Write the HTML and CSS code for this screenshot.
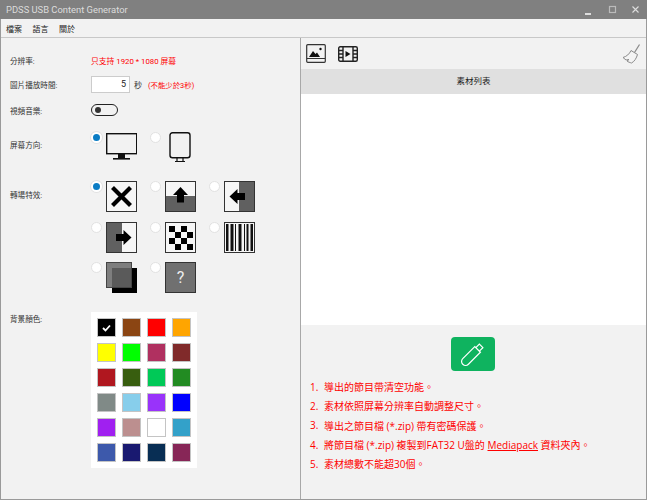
FILE: index.html
```html
<!DOCTYPE html>
<html lang="zh-Hant">
<head>
<meta charset="utf-8">
<title>PDSS USB Content Generator</title>
<link rel="stylesheet" href="styles.css">
</head>
<body>
<div class="window">
  <header class="titlebar">
    <span class="title">PDSS USB Content Generator</span>
    <div class="controls">
      <svg class="ctl" width="10" height="10" viewBox="0 0 10 10"><rect x="0" y="8" width="6" height="2" fill="#ddd"/></svg>
      <svg class="ctl" width="10" height="10" viewBox="0 0 10 10"><rect x="1.5" y="1.5" width="6" height="6" fill="none" stroke="#bbb" stroke-width="1.2"/></svg>
      <svg class="ctl" width="10" height="10" viewBox="0 0 10 10"><path d="M1.5 1.5l6 6M7.5 1.5l-6 6" stroke="#ddd" stroke-width="1.1"/></svg>
    </div>
  </header>
  <nav class="menubar"><span>檔案</span><span>語言</span><span>關於</span></nav>
  <main class="content">
    <section class="left">
      <div class="row row-res">
        <div class="label">分辨率:</div>
        <div class="red">只支持 1920 * 1080 屏幕</div>
      </div>
      <div class="row row-time">
        <div class="label">圖片播放時間:</div>
        <div class="inline">
          <div class="spin">5</div>
          <span class="unit">秒</span>
          <span class="red small">(不能少於3秒)</span>
        </div>
      </div>
      <div class="row row-music">
        <div class="label">視頻音樂:</div>
        <div class="toggle"><i class="knob"></i></div>
      </div>
      <div class="row row-orient">
        <div class="label label-orient">屏幕方向:</div>
        <div class="options">
          <div class="option">
            <i class="radio on"></i>
            <svg class="tile-svg" width="31" height="30" viewBox="0 0 31 30"><rect x="0.7" y="1.700" width="30" height="20" fill="none" stroke="#111" stroke-width="1.400"/><rect x="12" y="22" width="7" height="4" fill="#111"/><rect x="7" y="26" width="17" height="1.600" fill="#111"/></svg>
          </div>
          <div class="option option-tall">
            <i class="radio"></i>
            <svg class="tile-svg" width="31" height="30" viewBox="0 0 31 30"><rect x="5" y="0.700" width="20" height="25" rx="2.500" fill="none" stroke="#111" stroke-width="1.400"/><path d="M12 26v3M18 26v3M10 29.500h10" stroke="#111" stroke-width="1.200" fill="none"/></svg>
          </div>
        </div>
      </div>
      <div class="row row-effect">
        <div class="label label-effect">轉場特效:</div>
        <div class="effects">
          <div class="option"><i class="radio on"></i>
            <svg class="tile-svg" width="31" height="31" viewBox="0 0 31 31"><rect x="0.500" y="0.500" width="30" height="30" fill="#f6f6f6" stroke="#333"/><path d="M6.500 6.500l18 18M24.500 6.500l-18 18" stroke="#000" stroke-width="4.200"/></svg></div>
          <div class="option"><i class="radio"></i>
            <svg class="tile-svg" width="31" height="31" viewBox="0 0 31 31"><rect x="0.500" y="0.500" width="30" height="30" fill="#f6f6f6" stroke="#333"/><rect x="1" y="15" width="29" height="15" fill="#606060"/><path d="M15.500 6l7.500 8h-4v7.500h-7v-7.500h-4z" fill="#000"/></svg></div>
          <div class="option"><i class="radio"></i>
            <svg class="tile-svg" width="31" height="31" viewBox="0 0 31 31"><rect x="0.500" y="0.500" width="30" height="30" fill="#f6f6f6" stroke="#333"/><rect x="15" y="1" width="15" height="29" fill="#606060"/><path d="M5.500 15.500l8-7.500v4h7.500v7h-7.500v4z" fill="#000"/></svg></div>
          <div class="option"><i class="radio"></i>
            <svg class="tile-svg" width="31" height="31" viewBox="0 0 31 31"><rect x="0.500" y="0.500" width="30" height="30" fill="#f6f6f6" stroke="#333"/><rect x="1" y="1" width="15" height="29" fill="#606060"/><path d="M25.500 15.500l-8 7.500v-4h-7.500v-7h7.500v-4z" fill="#000"/></svg></div>
          <div class="option"><i class="radio"></i>
            <svg class="tile-svg" width="31" height="31" viewBox="0 0 31 31"><rect x="0.500" y="0.500" width="30" height="30" fill="#f6f6f6" stroke="#333"/><path d="M4 4h6v6h-6zM16 4h6v6h-6zM10 10h6v6h-6zM22 10h6v6h-6zM4 16h6v6h-6zM16 16h6v6h-6zM10 22h6v6h-6zM22 22h6v6h-6z" fill="#000"/></svg></div>
          <div class="option"><i class="radio"></i>
            <svg class="tile-svg" width="31" height="31" viewBox="0 0 31 31"><rect x="0.500" y="0.500" width="30" height="30" fill="#f6f6f6" stroke="#333"/><path d="M2 2h2.500v27h-2.500zM6.500 2h3v27h-3zM11 2h1v27h-1zM14.500 2h3v27h-3zM20 2h1v27h-1zM22.500 2h2v27h-2zM26.500 2h2.500v27h-2.500z" fill="#111"/></svg></div>
          <div class="option"><i class="radio"></i>
            <svg class="tile-svg" width="31" height="31" viewBox="0 0 31 31"><rect x="6" y="6" width="25" height="25" fill="#000"/><rect x="0.500" y="0.500" width="25" height="25" fill="#6a6a6a" fill-opacity="0.850" stroke="#444"/></svg></div>
          <div class="option"><i class="radio"></i>
            <div class="tile-q">?</div></div>
        </div>
      </div>
      <div class="row row-color">
        <div class="label label-color">背景顏色:</div>
        <div class="palette">
          <div class="swatch c1"><svg width="11" height="9" viewBox="0 0 11 9"><path d="M2 5l2.500 2.500 4.500-5" stroke="#fff" stroke-width="1.800" fill="none"/></svg></div>
          <div class="swatch c2"></div><div class="swatch c3"></div><div class="swatch c4"></div>
          <div class="swatch c5"></div><div class="swatch c6"></div><div class="swatch c7"></div><div class="swatch c8"></div>
          <div class="swatch c9"></div><div class="swatch c10"></div><div class="swatch c11"></div><div class="swatch c12"></div>
          <div class="swatch c13"></div><div class="swatch c14"></div><div class="swatch c15"></div><div class="swatch c16"></div>
          <div class="swatch c17"></div><div class="swatch c18"></div><div class="swatch c19"></div><div class="swatch c20"></div>
          <div class="swatch c21"></div><div class="swatch c22"></div><div class="swatch c23"></div><div class="swatch c24"></div>
        </div>
      </div>
    </section>
    <section class="right">
      <div class="toolbar">
        <svg width="20" height="19" viewBox="0 0 20 19"><rect x="0.700" y="0.700" width="18.600" height="17.600" rx="1" fill="none" stroke="#333" stroke-width="1.200"/><path d="M1 14.500h18" stroke="#333"/><path d="M3 13l4-6 2.500 3 1.500-1.500 3 4.500z" fill="#111"/><circle cx="14.500" cy="5" r="1.200" fill="#111"/></svg>
        <svg class="film" width="20" height="16" viewBox="0 0 20 16"><rect x="0.700" y="0.700" width="18.600" height="14.600" rx="1.500" fill="none" stroke="#222" stroke-width="1.400"/><path d="M5 1v14M15 1v14" stroke="#222" stroke-width="1.400"/><path d="M1 4.500h4M1 8h4M1 11.500h4M15 4.500h4M15 8h4M15 11.500h4" stroke="#222" stroke-width="1.300"/><path d="M7.500 5l5 3-5 3z" fill="#111"/></svg>
        <svg class="broom" width="19" height="20" viewBox="0 0 19 20"><path d="M17.500 0.500l-5 8" stroke="#8a8a8a" stroke-width="1.200"/><path d="M9 6.500l6.500 4c-1 3.500-3 7-6 8.500-1.500-.5-3.500-1-4.500-2l2-1.500-3 .5-3-2.500c3.500-1 6.500-3.500 8-7z" fill="#f4f4f4" stroke="#8a8a8a"/></svg>
      </div>
      <div class="list-head">素材列表</div>
      <div class="list-body"></div>
      <div class="bottom">
        <div class="usb-btn">
          <svg class="usb-icon" width="22" height="22" viewBox="0 0 22 22"><g transform="rotate(-45 11 11)" fill="none" stroke="#fff" stroke-width="1.200"><path d="M17.500 7h-17a4 4 0 0 0 0 8h17z"/><path d="M17.500 8.500h5v5h-5"/></g></svg>
        </div>
        <ol class="notes">
          <li><span class="n">1.</span><span>導出的節目帶清空功能。</span></li>
          <li><span class="n">2.</span><span>素材依照屏幕分辨率自動調整尺寸。</span></li>
          <li><span class="n">3.</span><span>導出之節目檔 (*.zip) 帶有密碼保護。</span></li>
          <li><span class="n">4.</span><span>將節目檔 (*.zip) 複製到FAT32 U盤的 <u>Mediapack</u> 資料夾內。</span></li>
          <li><span class="n">5.</span><span>素材總數不能超30個。</span></li>
        </ol>
      </div>
    </section>
  </main>
</div>
</body>
</html>
```
FILE: styles.css
```css
* { box-sizing: border-box; }
html, body { margin: 0; padding: 0; }
body {
  width: 647px;
  height: 500px;
  overflow: hidden;
  font-family: Roboto, "Noto Sans CJK TC", sans-serif;
  color: #333;
}
.window {
  width: 647px;
  height: 500px;
  display: flex;
  flex-direction: column;
  background: #f2f2f2;
  border: 1px solid #9a9a9a;
  border-top: 0;
}
.titlebar {
  height: 19px;
  margin: 0 -1px;
  background: #808080;
  color: #dcdcdc;
  display: flex;
  align-items: center;
  justify-content: space-between;
  padding: 0 6px;
  font-size: 9.400px;
  flex: none;
}
.controls { display: flex; gap: 13px; margin-right: 0; }
.ctl { display: block; }
.menubar {
  height: 19px;
  flex: none;
  display: flex;
  align-items: center;
  gap: 10.500px;
  padding: 0 5px;
  font-size: 8px;
  color: #222;
  border-bottom: 1px solid #c8c8c8;
}
.content { flex: 1; display: flex; min-height: 0; }
.left {
  width: 300px;
  flex: none;
  padding: 12px 0 0 9px;
  border-right: 1px solid #a8a8a8;
  font-size: 8px;
}
.row { display: grid; grid-template-columns: 81px 1fr; align-items: center; }
.label { color: #333; font-size: 7.600px; }
.red { color: #f00; font-size: 7.800px; }
.red.small { font-size: 7.400px; }
.row-res { height: 20px; }
.row-time { height: 20px; margin-top: 4.500px; }
.row-music { height: 20px; margin-top: 5.500px; }
.row-orient { margin-top: 12px; align-items: start; }
.label-orient { padding-top: 7px; }
.row-effect { margin-top: 19px; align-items: start; }
.label-effect { padding-top: 8px; }
.row-color { margin-top: 19px; align-items: start; }
.label-color { line-height: 16px; }
.inline { display: flex; align-items: center; }
.spin {
  width: 39px;
  height: 17px;
  background: #fff;
  border: 1px solid #ccc;
  text-align: right;
  padding-right: 3px;
  line-height: 15px;
  font-size: 9px;
  color: #222;
}
.unit { margin-left: 4px; margin-right: 6px; font-size: 8px; color: #333; }
.toggle {
  width: 27px;
  height: 12px;
  border: 1.500px solid #222;
  border-radius: 6px;
  display: flex;
  align-items: center;
  padding-left: 3px;
}
.knob { width: 6px; height: 6px; border-radius: 50%; background: #333; display: block; }
.options { display: flex; }
.effects { display: grid; grid-template-columns: repeat(3, 59px); row-gap: 9.500px; }
.option { width: 59px; display: flex; align-items: flex-start; }
.radio {
  width: 11px;
  height: 11px;
  margin-right: 4px;
  border-radius: 50%;
  background: #fff;
  border: 1px solid #e2e2e2;
  display: block;
  flex: none;
}
.radio.on { border: 2px solid #fff; background: #0a7cc4; box-shadow: 0 0 0 1px #e2e2e2; }
.tile-svg { display: block; flex: none; }
.tile-q {
  width: 31px;
  height: 31px;
  background: #707070;
  border: 1px solid #333;
  color: #eee;
  font-size: 16px;
  line-height: 29px;
  text-align: center;
  flex: none;
}
.palette {
  width: 106px;
  height: 156px;
  background: #fff;
  padding: 6px;
  display: grid;
  grid-template-columns: repeat(4, 19px);
  grid-auto-rows: 19px;
  gap: 6px;
}
.swatch {
  border: 1px solid #c4c4c4;
  display: flex;
  align-items: center;
  justify-content: center;
}
.c1 { background: #000; }
.c2 { background: #8b4513; }
.c3 { background: #f00; }
.c4 { background: #ffa500; }
.c5 { background: #ff0; }
.c6 { background: #0f0; }
.c7 { background: #b03060; }
.c8 { background: #802a2a; }
.c9 { background: #b0171f; }
.c10 { background: #385e0f; }
.c11 { background: #00c957; }
.c12 { background: #228b22; }
.c13 { background: #808a87; }
.c14 { background: #87ceeb; }
.c15 { background: #9933fa; }
.c16 { background: #00f; }
.c17 { background: #a020f0; }
.c18 { background: #bc8f8f; }
.c19 { background: #fff; }
.c20 { background: #33a1c9; }
.c21 { background: #3d59ab; }
.c22 { background: #191970; }
.c23 { background: #082e54; }
.c24 { background: #872657; }
.right { flex: 1; display: flex; flex-direction: column; min-width: 0; }
.toolbar {
  height: 31px;
  flex: none;
  display: flex;
  align-items: center;
  padding: 0 5px;
  gap: 12px;
}
.broom { margin-left: auto; }
.list-head {
  height: 25px;
  flex: none;
  background: #e0e0e0;
  text-align: center;
  line-height: 25px;
  font-size: 8.500px;
  color: #222;
}
.list-body { height: 231px; flex: none; background: #fff; }
.bottom { flex: 1; padding-top: 12px; }
.usb-btn {
  width: 44px;
  height: 34px;
  margin-left: 150px;
  background: #0fb35f;
  border-radius: 4px;
  display: flex;
  align-items: center;
  justify-content: center;
}
.usb-icon { overflow: visible; }
.notes {
  list-style: none;
  margin: 6px 0 0;
  padding: 0 0 0 9px;
  color: #f00;
  font-family: "Open Sans", "Noto Sans CJK TC", sans-serif;
  font-size: 10px;
}
.notes li { display: flex; height: 19.300px; align-items: center; white-space: pre-wrap; }
.n { width: 14px; flex: none; }
```
